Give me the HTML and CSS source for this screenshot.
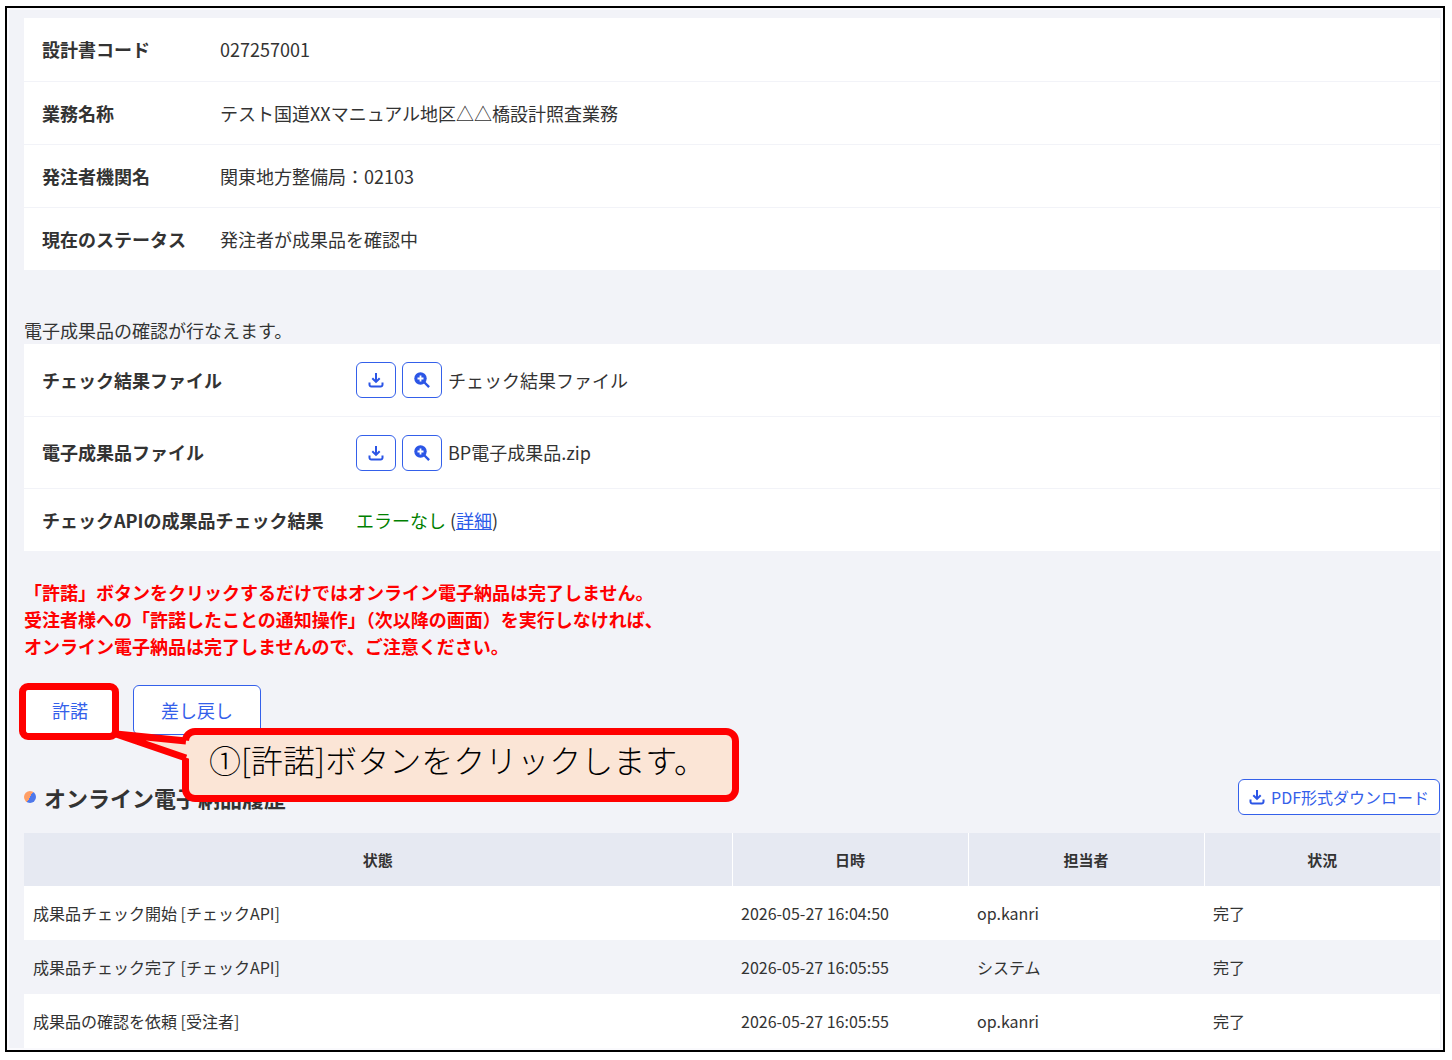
FILE: index.html
```html
<!DOCTYPE html>
<html lang="ja">
<head>
    <meta charset="UTF-8">
    <meta name="viewport" content="width=device-width, initial-scale=1.0">
    <title>オンライン電子納品</title>
    <link rel="stylesheet" href="styles.css">
</head>
<body>
    <svg class="sprite" aria-hidden="true">
        <symbol id="icon-download" viewBox="0 0 16 16">
            <path d="M8 1v8.500M4.300 6.200L8 9.900l3.700-3.700M1.500 10.500v2.200a1.800 1.800 0 0 0 1.800 1.800h9.400a1.800 1.800 0 0 0 1.800-1.800v-2.200" fill="none" stroke="currentColor" stroke-width="2"/>
        </symbol>
        <symbol id="icon-zoom" viewBox="0 0 16 16">
            <circle cx="6.500" cy="6.500" r="6.200" fill="currentColor"/>
            <path d="M10.500 10.500l4.600 4.600" stroke="currentColor" stroke-width="2.400"/>
            <path d="M6.500 3.500v6M3.500 6.500h6" stroke="#ffffff" stroke-width="1.800"/>
        </symbol>
    </svg>

    <main class="frame">
        <dl class="info">
            <div class="info-row">
                <dt>設計書コード</dt>
                <dd>027257001</dd>
            </div>
            <div class="info-row">
                <dt>業務名称</dt>
                <dd>テスト国道XXマニュアル地区△△橋設計照査業務</dd>
            </div>
            <div class="info-row">
                <dt>発注者機関名</dt>
                <dd>関東地方整備局：02103</dd>
            </div>
            <div class="info-row">
                <dt>現在のステータス</dt>
                <dd>発注者が成果品を確認中</dd>
            </div>
        </dl>

        <p class="lead">電子成果品の確認が行なえます。</p>
        <dl class="info files">
            <div class="info-row file-row">
                <dt>チェック結果ファイル</dt>
                <dd>
                    <button type="button" class="btn icon-btn" aria-label="ダウンロード"><svg class="icon"><use href="#icon-download"/></svg></button>
                    <button type="button" class="btn icon-btn" aria-label="表示"><svg class="icon"><use href="#icon-zoom"/></svg></button>
                    <span>チェック結果ファイル</span>
                </dd>
            </div>
            <div class="info-row file-row">
                <dt>電子成果品ファイル</dt>
                <dd>
                    <button type="button" class="btn icon-btn" aria-label="ダウンロード"><svg class="icon"><use href="#icon-download"/></svg></button>
                    <button type="button" class="btn icon-btn" aria-label="表示"><svg class="icon"><use href="#icon-zoom"/></svg></button>
                    <span>BP電子成果品.zip</span>
                </dd>
            </div>
            <div class="info-row">
                <dt>チェックAPIの成果品チェック結果</dt>
                <dd class="result"><span class="ok">エラーなし</span><span>(<a href="#">詳細</a>)</span></dd>
            </div>
        </dl>

        <p class="warning">
            「許諾」ボタンをクリックするだけではオンライン電子納品は完了しません。<br>
            受注者様への「許諾したことの通知操作」（次以降の画面）を実行しなければ、<br>
            オンライン電子納品は完了しませんので、ご注意ください。
        </p>

        <div class="actions">
            <button type="button" class="btn action-btn">許諾</button>
            <button type="button" class="btn action-btn">差し戻し</button>

            <!-- 操作説明の吹き出し -->
            <div class="highlight"></div>
            <div class="callout">①[許諾]ボタンをクリックします。</div>
            <svg class="callout-tail" viewBox="0 0 84 40" aria-hidden="true">
                <path d="M80 14L6 7l74 25" fill="#fbe5d6"/>
                <path d="M76 14L6 7l70 24" fill="none" stroke="#ff0000" stroke-width="7"/>
            </svg>
        </div>

        <div class="history-head">
            <h2>オンライン電子納品履歴</h2>
            <button type="button" class="btn pdf-btn"><svg class="icon"><use href="#icon-download"/></svg>PDF形式ダウンロード</button>
        </div>

        <table class="history">
            <thead>
                <tr>
                    <th class="col-state">状態</th>
                    <th>日時</th>
                    <th>担当者</th>
                    <th>状況</th>
                </tr>
            </thead>
            <tbody>
                <tr>
                    <td>成果品チェック開始 [チェックAPI]</td>
                    <td>2026-05-27 16:04:50</td>
                    <td>op.kanri</td>
                    <td>完了</td>
                </tr>
                <tr>
                    <td>成果品チェック完了 [チェックAPI]</td>
                    <td>2026-05-27 16:05:55</td>
                    <td>システム</td>
                    <td>完了</td>
                </tr>
                <tr>
                    <td>成果品の確認を依頼 [受注者]</td>
                    <td>2026-05-27 16:05:55</td>
                    <td>op.kanri</td>
                    <td>完了</td>
                </tr>
            </tbody>
        </table>
    </main>
</body>
</html>
```
FILE: styles.css
```css
* {
    box-sizing: border-box;
}
body {
    margin: 6px 7px 8px 5px;
    background-color: #ffffff;
    color: #333333;
    font-family: "Noto Sans CJK JP", sans-serif;
    font-size: 18px;
    line-height: 27px;
}
dl, dd, p, h2 {
    margin: 0;
}
a {
    color: #2b5be8;
}
.sprite {
    display: none;
}
.frame {
    border: 2px solid #000000;
    background-color: #f2f3f8;
    box-shadow: inset 0 0 0 2px #fafafd;
    padding: 10px 3px 2px 17px;
}

/* 項目一覧 */
.info {
    background-color: #ffffff;
}
.info-row {
    display: grid;
    grid-template-columns: 178px 1fr;
    align-items: center;
    min-height: 63px;
    padding: 0 18px;
}
.info-row + .info-row {
    border-top: 1px solid #f2f3f8;
}
.info dt {
    font-weight: bold;
}
.files .info-row {
    grid-template-columns: 314px 1fr;
}
.files .file-row {
    min-height: 72px;
}
.info dd {
    display: flex;
    align-items: center;
    gap: 6px;
}
.info .result {
    gap: 4px;
}
.ok {
    color: #008000;
}
.lead {
    margin-top: 47px;
}
.warning {
    margin-top: 28px;
    color: #ff0000;
    font-weight: bold;
}

/* ボタン */
.btn {
    display: inline-flex;
    align-items: center;
    justify-content: center;
    border: 1px solid #3460ea;
    border-radius: 6px;
    background-color: #ffffff;
    color: #3460ea;
    font-family: inherit;
    cursor: pointer;
}
.btn:hover {
    background-color: #eef2ff;
}
.icon {
    width: 16px;
    height: 16px;
    color: #2b55e6;
}
.icon-btn {
    width: 40px;
    height: 36px;
    padding: 0;
}
.actions {
    position: relative;
    display: flex;
    gap: 17px;
    margin-top: 25px;
}
.action-btn {
    height: 50px;
    padding: 0 27px;
    font-size: 18px;
}

/* 吹き出し */
.highlight {
    position: absolute;
    top: -2px;
    left: -5px;
    width: 100px;
    height: 57px;
    border: 7px solid #ff0000;
    border-radius: 9px;
    pointer-events: none;
}
.callout {
    position: absolute;
    top: 43px;
    left: 158px;
    width: 557px;
    height: 74px;
    padding: 0 20px;
    border: 7px solid #ff0000;
    border-radius: 13px;
    background-color: #fbe5d6;
    color: #000000;
    font-size: 32px;
    font-weight: 300;
    line-height: 48px;
    white-space: nowrap;
}
.callout-tail {
    position: absolute;
    top: 42px;
    left: 86px;
    width: 84px;
    height: 40px;
}

/* 履歴 */
.history-head {
    display: flex;
    justify-content: space-between;
    align-items: center;
    margin-top: 44px;
}
.history-head h2 {
    display: flex;
    align-items: center;
    gap: 8px;
    font-size: 22px;
}
.history-head h2::before {
    content: "";
    width: 12px;
    height: 12px;
    border-radius: 50%;
    background: linear-gradient(120deg, #ff9e66 50%, #4f78ea 50%);
}
.pdf-btn {
    gap: 6px;
    height: 36px;
    padding: 0 10px;
    font-size: 16px;
}
.history {
    width: 100%;
    margin-top: 18px;
    border-collapse: collapse;
    table-layout: fixed;
    background-color: #ffffff;
    font-size: 16px;
}
.history th {
    height: 53px;
    padding: 0 10px;
    background-color: #e6e9f2;
    font-size: 15px;
}
.history th + th {
    border-left: 1px solid #ffffff;
}
.history .col-state {
    width: 50%;
}
.history td {
    height: 54px;
    padding: 0 9px;
}
.history tbody tr:nth-child(even) {
    background-color: #f2f3f8;
}
```
